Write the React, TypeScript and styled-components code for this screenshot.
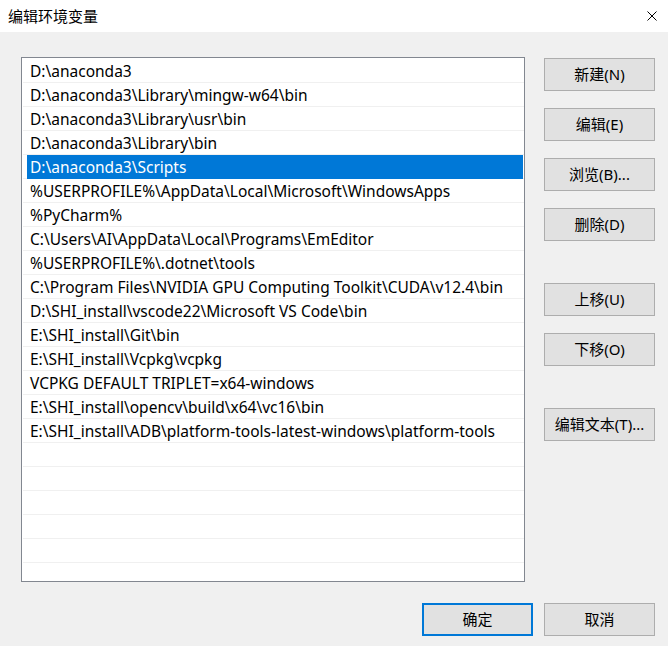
import React from "react";
import styled, { createGlobalStyle } from "styled-components";

const GlobalStyle = createGlobalStyle`
  html, body {
    margin: 0;
    padding: 0;
    background: #f0f0f0;
  }
  body {
    font-family: "Noto Sans", "Noto Sans CJK SC", sans-serif;
    font-size: 15px;
    color: #000;
  }
`;

const Window = styled.div`
  width: 668px;
  height: 646px;
  background: #f0f0f0;
  display: flex;
  flex-direction: column;
  overflow: hidden;
`;

const TitleBar = styled.div`
  height: 32px;
  background: #fff;
  display: flex;
  align-items: center;
  justify-content: space-between;
  padding: 0 11px 1px 8px;
  box-sizing: border-box;
`;

const Title = styled.span`
  font-family: "Noto Sans CJK SC", sans-serif;
  font-size: 15px;
  line-height: 20px;
`;

const CloseIcon = styled.svg`
  width: 10px;
  height: 10px;
  display: block;
`;

const Body = styled.div`
  display: flex;
  flex-direction: column;
  padding: 25px 13px 0 21px;
`;

const MainRow = styled.div`
  display: flex;
  gap: 19px;
`;

const ListBox = styled.div`
  width: 504px;
  height: 525px;
  box-sizing: border-box;
  border: 1px solid #828790;
  background: #fff;
  padding: 1px 0 0 1px;
  overflow: hidden;
`;

const Row = styled.div`
  width: 501px;
  height: 24px;
  box-sizing: border-box;
  border-bottom: 1px solid #f0f0f0;
  display: flex;
`;

const Item = styled.div<{ $selected?: boolean }>`
  flex: 1;
  margin: ${(p) => (p.$selected ? "0 1px -1px 4px" : "0 1px 0 4px")};
  padding-left: 3px;
  height: 24px;
  line-height: 25px;
  white-space: nowrap;
  background: ${(p) => (p.$selected ? "#0078d7" : "transparent")};
  color: ${(p) => (p.$selected ? "#fff" : "#000")};
  font-family: "Noto Sans", "Noto Sans CJK SC", sans-serif;
  font-size: 15.5px;
`;

const SideColumn = styled.div`
  display: flex;
  flex-direction: column;
  gap: 42px;
  padding-top: 1px;
`;

const ButtonGroup = styled.div`
  display: flex;
  flex-direction: column;
  gap: 17px;
`;

const Button = styled.button<{ $default?: boolean }>`
  width: 111px;
  height: 33px;
  box-sizing: border-box;
  margin: 0;
  padding: 0 0 2px;
  background: #e1e1e1;
  border: ${(p) => (p.$default ? "2px solid #0078d7" : "1px solid #adadad")};
  font-family: "Noto Sans", "Noto Sans CJK SC", sans-serif;
  font-size: 15px;
  color: #000;
  cursor: default;
`;

const FooterRow = styled.div`
  display: flex;
  justify-content: flex-end;
  gap: 11px;
  margin-top: 21px;
`;

const paths = [
  "D:\\anaconda3",
  "D:\\anaconda3\\Library\\mingw-w64\\bin",
  "D:\\anaconda3\\Library\\usr\\bin",
  "D:\\anaconda3\\Library\\bin",
  "D:\\anaconda3\\Scripts",
  "%USERPROFILE%\\AppData\\Local\\Microsoft\\WindowsApps",
  "%PyCharm%",
  "C:\\Users\\AI\\AppData\\Local\\Programs\\EmEditor",
  "%USERPROFILE%\\.dotnet\\tools",
  "C:\\Program Files\\NVIDIA GPU Computing Toolkit\\CUDA\\v12.4\\bin",
  "D:\\SHI_install\\vscode22\\Microsoft VS Code\\bin",
  "E:\\SHI_install\\Git\\bin",
  "E:\\SHI_install\\Vcpkg\\vcpkg",
  "VCPKG DEFAULT TRIPLET=x64-windows",
  "E:\\SHI_install\\opencv\\build\\x64\\vc16\\bin",
  "E:\\SHI_install\\ADB\\platform-tools-latest-windows\\platform-tools",
];

const SELECTED = 4;
const EMPTY_ROWS = 6;

export default function App() {
  const rows = [...paths, ...Array(EMPTY_ROWS).fill("")];

  return (
    <>
      <GlobalStyle />
      <Window>
        <TitleBar>
          <Title>编辑环境变量</Title>
          <CloseIcon viewBox="0 0 10 10">
            <path d="M0.5 0.5 L9.5 9.5 M9.5 0.5 L0.5 9.5" stroke="#000" strokeWidth="1" fill="none" />
          </CloseIcon>
        </TitleBar>

        <Body>
          <MainRow>
            <ListBox>
              {rows.map((p, i) => (
                <Row key={i}>
                  <Item $selected={i === SELECTED}>{p}</Item>
                </Row>
              ))}
            </ListBox>

            <SideColumn>
              <ButtonGroup>
                <Button>新建(N)</Button>
                <Button>编辑(E)</Button>
                <Button>浏览(B)...</Button>
                <Button>删除(D)</Button>
              </ButtonGroup>
              <ButtonGroup>
                <Button>上移(U)</Button>
                <Button>下移(O)</Button>
              </ButtonGroup>
              <ButtonGroup>
                <Button>编辑文本(T)...</Button>
              </ButtonGroup>
            </SideColumn>
          </MainRow>

          <FooterRow>
            <Button $default>确定</Button>
            <Button>取消</Button>
          </FooterRow>
        </Body>
      </Window>
    </>
  );
}
